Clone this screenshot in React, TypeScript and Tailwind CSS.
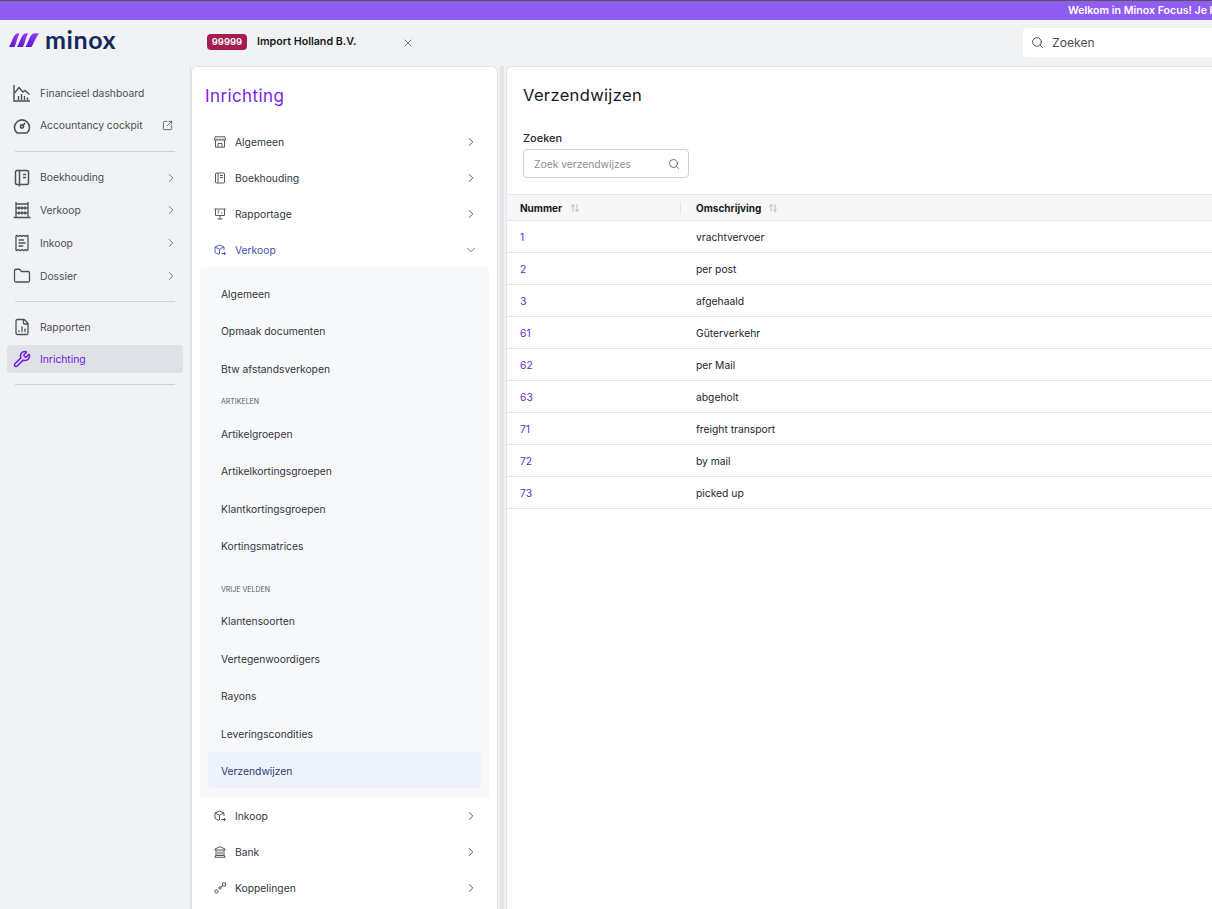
import React from 'react';
import { ChevronRight, ChevronDown, Search, X, SquareArrowOutUpRight, ReceiptText, Folder, FileChartColumn, Wrench, ArrowUpDown } from 'lucide-react';

const Logo = () => (
  <svg width="30" height="14" viewBox="0 0 30 14">
    <defs>
      <linearGradient id="lg" x1="0" y1="1" x2="1" y2="0">
        <stop offset="0" stopColor="#5510d4" />
        <stop offset="1" stopColor="#a040f5" />
      </linearGradient>
    </defs>
    <path d="M0 14 C3 9 4 3 7 1 Q8.500 0 10.500 0.500 C8.500 4 7.500 10 5.500 14 Z" fill="url(#lg)" />
    <path d="M8 14 C11 9 12 3 15 1 Q16.500 0 19 0.500 C17 4 16 10 14 14 Z" fill="url(#lg)" />
    <path d="M16.500 14 C19.500 9 20.500 3 23.500 1 Q25 0 30 0.500 C27 4 25 10 22.500 14 Z" fill="url(#lg)" />
  </svg>
);

const ChartIcon = ({ className }: { className?: string }) => (
  <svg className={className} viewBox="0 0 18 18" fill="none" stroke="currentColor" strokeWidth="1.4">
    <path d="M1 1v16h16" />
    <path d="M1.500 9 6 3.500l4 4.500 2-1.500 4.500 4" />
    <path d="M5.500 16v-4M8.500 16v-6M11.500 16v-4M14.500 16v-2.500" />
  </svg>
);

const GaugeIcon = ({ className }: { className?: string }) => (
  <svg className={className} viewBox="0 0 18 18" fill="none" stroke="currentColor" strokeWidth="1.6">
    <path d="M4 16a7.500 7.500 0 1 1 10 0Z" strokeLinejoin="round" />
    <circle cx="9" cy="9.500" r="1.600" />
    <path d="M10 8.500l2-2.500" />
  </svg>
);

const BookIcon = ({ className }: { className?: string }) => (
  <svg className={className} viewBox="0 0 18 18" fill="none" stroke="currentColor" strokeWidth="1.500">
    <rect x="2.500" y="1.500" width="13" height="14" rx="1.500" />
    <path d="M6.500 1.500v14M6.500 15.500v2M10 5.500h3M10 8.500h3" />
  </svg>
);

const AbacusIcon = ({ className }: { className?: string }) => (
  <svg className={className} viewBox="0 0 18 18" fill="none" stroke="currentColor" strokeWidth="1.300">
    <path d="M3 1v15M15 1v15M3 3h12M0.500 16.500h17M3 7h12M3 12h12" />
    <path d="M6 5.500v3M9 5.500v3M12 5.500v3M6 10.500v3M9 10.500v3M12 10.500v3" strokeWidth="1.600" />
  </svg>
);

const StoreIcon = ({ className }: { className?: string }) => (
  <svg className={className} viewBox="0 0 12 12" fill="none" stroke="currentColor" strokeWidth="1">
    <path d="M1 .800h10v1.200l.5 2H.500l.5-2z" />
    <path d="M1.500 4v7.200h9V4" />
    <path d="M4 11V7.500h4V11M3 2.500v1.500M6 2.500v1.500M9 2.500v1.500" />
  </svg>
);

const BookSmallIcon = ({ className }: { className?: string }) => (
  <svg className={className} viewBox="0 0 12 12" fill="none" stroke="currentColor" strokeWidth="1">
    <rect x="1.500" y="1" width="9" height="10" rx="1" />
    <path d="M4 1v10M6 3.500h3M6 5.500h3" />
  </svg>
);

const BoardIcon = ({ className }: { className?: string }) => (
  <svg className={className} viewBox="0 0 12 12" fill="none" stroke="currentColor" strokeWidth="1">
    <path d="M.500 1h11M1.500 1v6.500h9V1M6 7.500V11M3.500 11h5" />
    <path d="M3.500 3h2M3.500 5h1.500M7 5h1.500" />
  </svg>
);

const BoxIcon = ({ className }: { className?: string }) => (
  <svg className={className} viewBox="0 0 12 12" fill="none" stroke="currentColor" strokeWidth="1">
    <path d="M5 10.500 1 8.500V3l4.500-2L10 3v3M1 3l4.500 2.200L10 3M5.500 5.200V10" />
    <path d="M7.500 9.500h4M10 8l1.500 1.500L10 11" />
  </svg>
);

const BankIcon = ({ className }: { className?: string }) => (
  <svg className={className} viewBox="0 0 12 12" fill="none" stroke="currentColor" strokeWidth="1">
    <path d="M6 .700 1 3v1h10V3zM.500 11.300h11M1.500 11V9.500h9V11" />
    <path d="M2 4v5.500M10 4v5.500M4 5.500v3M6 5.500v3M8 5.500v3" />
  </svg>
);

const NodesIcon = ({ className }: { className?: string }) => (
  <svg className={className} viewBox="0 0 12 12" fill="none" stroke="currentColor" strokeWidth="1">
    <circle cx="2.500" cy="9.500" r="1.700" />
    <circle cx="6" cy="6" r="1.200" />
    <path d="M8.500 1h3v3h-3z" />
    <path d="M7 5l1.500-1.500" />
  </svg>
);

const leftTop = [
  { label: 'Boekhouding', icon: BookIcon },
  { label: 'Verkoop', icon: AbacusIcon },
  { label: 'Inkoop', icon: ReceiptText },
  { label: 'Dossier', icon: Folder },
];

const subOne = ['Algemeen', 'Opmaak documenten', 'Btw afstandsverkopen'];
const subTwo = ['Artikelgroepen', 'Artikelkortingsgroepen', 'Klantkortingsgroepen', 'Kortingsmatrices'];
const subThree = ['Klantensoorten', 'Vertegenwoordigers', 'Rayons', 'Leveringscondities'];

const rows = [
  ['1', 'vrachtvervoer'],
  ['2', 'per post'],
  ['3', 'afgehaald'],
  ['61', 'Güterverkehr'],
  ['62', 'per Mail'],
  ['63', 'abgeholt'],
  ['71', 'freight transport'],
  ['72', 'by mail'],
  ['73', 'picked up'],
];

const SideItem = ({ label, icon: Icon, chevron, active }: { label: string; icon: React.ElementType; chevron?: boolean; active?: boolean }) => (
  <div className={`flex items-center h-[28px] mb-[4.7px] mx-[7px] pl-[6px] pr-[5px] rounded ${active ? 'bg-[#dfe1e6] text-[#6d1fe0]' : 'text-[#4a4f59]'}`}>
    <Icon className={`w-[18px] h-[18px] shrink-0 ${active ? 'text-[#6d1fe0]' : 'text-[#4b4f57]'}`} strokeWidth={active ? 2 : 1.7} />
    <span className="ml-[9px] mt-[1px] flex-1 text-[10.3px]">{label}</span>
    {chevron && <ChevronRight className="w-[14px] h-[14px] text-[#5b606a]" strokeWidth={1.5} />}
  </div>
);

const MenuItem = ({ label, icon: Icon, open }: { label: string; icon: React.ElementType; open?: boolean }) => (
  <div className={`flex items-center h-[36px] pl-[22px] pr-[19px] ${open ? 'text-[#3f51a8]' : 'text-[#33363c]'}`}>
    <Icon className={`w-[12px] h-[12px] shrink-0 ${open ? 'text-[#4f63b8]' : 'text-[#55585e]'}`} />
    <span className="ml-[9px] mt-[2px] flex-1 text-[10.3px]">{label}</span>
    {open ? (
      <ChevronDown className="w-[14px] h-[14px]" strokeWidth={1.3} />
    ) : (
      <ChevronRight className="w-[14px] h-[14px]" strokeWidth={1.4} />
    )}
  </div>
);

const SubItem = ({ label, active }: { label: string; active?: boolean }) => (
  <div className={`flex items-center h-[36px] mb-[1.5px] px-[13px] rounded text-[10.3px] ${active ? 'pt-[5px] -mt-[1px] bg-[#eef2fd] text-[#2e3a6e]' : 'pt-[3px] text-[#33363c]'}`}>
    {label}
  </div>
);

export default function App() {
  return (
    <div className="h-[909px] w-[1212px] overflow-hidden bg-[#f1f2f4] font-['Inter',sans-serif] flex flex-col">
      {/* banner */}
      <div className="h-[20px] shrink-0 bg-[#8f5df2] border-t border-[#555] pl-[1068px] flex items-center whitespace-nowrap text-[10.6px] font-semibold text-white overflow-hidden">
        Welkom in Minox Focus! Je kunt nu ook
      </div>

      {/* top bar */}
      <div className="h-[46px] shrink-0 flex items-center">
        <div className="w-[207px] pl-[9px] flex items-center gap-[6px] -mt-[7px]">
          <Logo />
          <span className="text-[25px] leading-none font-bold tracking-[0.6px] text-[#14295c] font-['Lato',sans-serif]">minox</span>
        </div>
        <span className="h-[16px] w-[40px] -mt-[2px] rounded bg-[#a51d52] text-white text-[9.500px] font-semibold flex items-center justify-center">99999</span>
        <span className="ml-[10px] -mt-[2px] text-[10.700px] font-semibold text-[#15181e]">Import Holland B.V.</span>
        <X className="ml-[46px] -mt-[1px] w-[12px] h-[12px] text-[#55585e]" strokeWidth={1.6} />
        <div className="ml-auto w-[189px] h-[29px] -mt-[1px] bg-white rounded-l flex items-center pl-[8px]">
          <Search className="w-[13px] h-[13px] text-[#4b4f57]" strokeWidth={1.8} />
          <span className="ml-[8px] mt-[1px] text-[12.200px] text-[#4b4f57]">Zoeken</span>
        </div>
      </div>

      <div className="flex flex-1 min-h-0">
        {/* left nav */}
        <div className="w-[191px] shrink-0 border-r border-[#dcdee2] pt-[13px]">
          <SideItem label="Financieel dashboard" icon={ChartIcon} />
          <div className="relative">
            <SideItem label="Accountancy cockpit" icon={GaugeIcon} />
            <SquareArrowOutUpRight className="absolute right-[17px] top-[8px] w-[11px] h-[11px] text-[#4b4f57]" strokeWidth={1.8} />
          </div>
          <div className="mx-[15px] mt-[11px] mb-[12px] h-px bg-[#d0d2d6]" />
          {leftTop.map((item) => (
            <SideItem key={item.label} label={item.label} icon={item.icon} chevron />
          ))}
          <div className="mx-[15px] mt-[11px] mb-[11px] h-px bg-[#d0d2d6]" />
          <SideItem label="Rapporten" icon={FileChartColumn} />
          <SideItem label="Inrichting" icon={Wrench} active />
          <div className="mx-[15px] mt-[11px] h-px bg-[#d0d2d6]" />
        </div>

        {/* menu panel */}
        <div className="w-[307px] shrink-0 bg-white rounded-t-md border border-[#e3e4e7] border-b-0">
          <div className="pl-[13px] pt-[18px] h-[57px] text-[17px] leading-[22px] font-normal tracking-[0.4px] text-[#7a22ea]">Inrichting</div>
          <MenuItem label="Algemeen" icon={StoreIcon} />
          <MenuItem label="Boekhouding" icon={BookSmallIcon} />
          <MenuItem label="Rapportage" icon={BoardIcon} />
          <MenuItem label="Verkoop" icon={BoxIcon} open />
          <div className="mx-[8px] -mt-[1px] px-[8px] pt-[8px] pb-[9px] bg-[#f7f8fa] rounded">
            {subOne.map((s) => (
              <SubItem key={s} label={s} />
            ))}
            <div className="h-[8px] flex items-end pl-[13px] mt-[11px] mb-[10px] text-[7px] leading-none uppercase text-[#555a63]">Artikelen</div>
            {subTwo.map((s) => (
              <SubItem key={s} label={s} />
            ))}
            <div className="h-[8px] flex items-end pl-[13px] mt-[21px] mb-[10px] text-[7px] leading-none uppercase text-[#555a63]">Vrije velden</div>
            {subThree.map((s) => (
              <SubItem key={s} label={s} />
            ))}
            <SubItem label="Verzendwijzen" active />
          </div>
          <MenuItem label="Inkoop" icon={BoxIcon} />
          <MenuItem label="Bank" icon={BankIcon} />
          <MenuItem label="Koppelingen" icon={NodesIcon} />
        </div>

        {/* splitter */}
        <div className="w-[4px] ml-[2px] shrink-0 bg-[#e4e5e8]" />

        {/* content panel */}
        <div className="flex-1 ml-[2px] bg-white rounded-tl-md border-l border-t border-[#e3e4e7]">
          <div className="pl-[16px] pt-[17px] h-[62px] text-[16.500px] leading-[22px] font-normal tracking-[0.35px] text-[#15181e]">Verzendwijzen</div>
          <div className="pl-[16px] h-[65px] pt-[1px]">
            <div className="text-[11px] leading-[16px] font-medium text-[#22252b]">Zoeken</div>
            <div className="mt-[3px] w-[166px] h-[29px] rounded border border-[#cdd0d5] flex items-center pl-[10px] pr-[8px]">
              <span className="flex-1 mt-[2px] text-[10.300px] text-[#8a8e96]">Zoek verzendwijzes</span>
              <Search className="w-[12px] h-[12px] text-[#4b4f57]" strokeWidth={1.6} />
            </div>
          </div>
          <div className="h-[27px] pt-[1px] bg-[#f6f7f9] border-y border-[#e6e7ea] flex items-center text-[10px] font-bold text-[#15181e]">
            <div className="w-[174px] pl-[13px] flex items-center border-r border-[#e6e7ea] h-[12px]">
              Nummer
              <ArrowUpDown className="ml-[8px] w-[10px] h-[10px] text-[#9a9ea6]" strokeWidth={1.5} />
            </div>
            <div className="pl-[15px] flex items-center">
              Omschrijving
              <ArrowUpDown className="ml-[7px] w-[10px] h-[10px] text-[#9a9ea6]" strokeWidth={1.5} />
            </div>
          </div>
          {rows.map(([nr, text]) => (
            <div key={nr} className="h-[32px] pt-[3px] border-b border-[#e6e7ea] flex items-center text-[10.300px]">
              <div className="w-[189px] pl-[13px] text-[#6d1fe0]">{nr}</div>
              <div className="text-[#22252b]">{text}</div>
            </div>
          ))}
        </div>
      </div>
    </div>
  );
}
